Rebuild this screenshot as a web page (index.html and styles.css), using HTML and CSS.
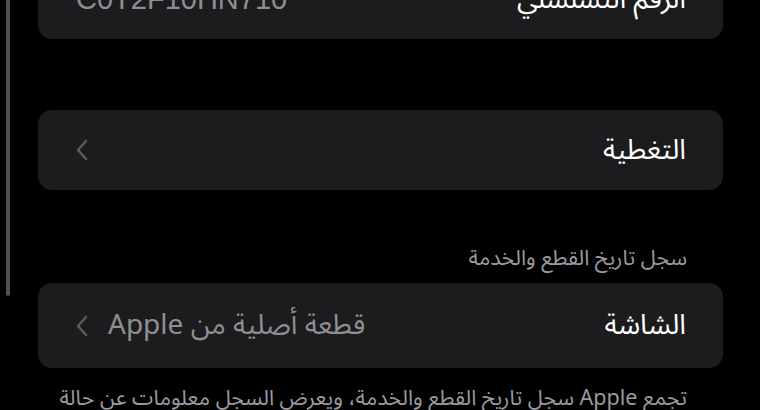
FILE: index.html
```html
<!DOCTYPE html>
<html lang="ar" dir="rtl">
<head>
<meta charset="utf-8">
<title>Parts and Service History</title>
<link rel="stylesheet" href="styles.css">
</head>
<body>
<div class="screen">
  <div class="card card-first">
    <div class="row">
      <span class="label">الرقم التسلسلي</span>
      <span class="value serial">C0T2F10HN710</span>
    </div>
  </div>

  <div class="card card-coverage">
    <div class="row">
      <span class="label">التغطية</span>
      <svg class="chev" width="12" height="22" viewBox="0 0 12 22"><polyline points="10,2 2,11 10,20" fill="none" stroke="#5b5b60" stroke-width="2.6" stroke-linecap="round" stroke-linejoin="round"/></svg>
    </div>
  </div>

  <div class="section-header">سجل تاريخ القطع والخدمة</div>

  <div class="card card-parts">
    <div class="row">
      <span class="label">الشاشة</span>
      <span class="detail">
        <span class="value">قطعة أصلية من Apple</span>
        <svg class="chev" width="12" height="22" viewBox="0 0 12 22"><polyline points="10,2 2,11 10,20" fill="none" stroke="#5b5b60" stroke-width="2.6" stroke-linecap="round" stroke-linejoin="round"/></svg>
      </span>
    </div>
  </div>

  <div class="footer">تجمع Apple سجل تاريخ القطع والخدمة، ويعرض السجل معلومات عن حالة</div>

  <div class="scroll-indicator"></div>
</div>
</body>
</html>
```

FILE: styles.css
```css
html, body {
  margin: 0;
  padding: 0;
  background: #000;
  overflow: hidden;
  height: 100%;
}

.screen {
  position: relative;
  width: 760px;
  height: 410px;
  overflow: hidden;
  box-sizing: border-box;
  padding: 0 37px 0 38px;
  display: flex;
  flex-direction: column;
  font-family: "Noto Sans Arabic", "DejaVu Sans", "Liberation Sans", sans-serif;
  color: #fff;
}

.card {
  background: #1c1c1e;
  border-radius: 14px;
  padding: 0 37px 0 38px;
  flex: none;
}

.card-first {
  margin-top: -41px;
}

.card-coverage {
  margin-top: 71px;
}

.row {
  display: flex;
  align-items: center;
  justify-content: space-between;
  height: 80px;
}

.card-parts .row {
  height: 85px;
}

.label {
  font-size: 28px;
  color: #fff;
}

.value {
  font-size: 28px;
  color: #8e8e93;
}

.serial {
  font-family: "Liberation Sans", sans-serif;
  font-size: 29px;
  direction: ltr;
}

.detail {
  display: flex;
  align-items: center;
  gap: 20px;
}

.chev {
  display: block;
  flex: none;
}

.section-header {
  margin-top: 55px;
  margin-bottom: 11px;
  padding-right: 36px;
  font-size: 21.5px;
  color: #9a9aa0;
  line-height: 27px;
  flex: none;
}

.footer {
  margin-top: 13px;
  padding-right: 36px;
  font-size: 21.5px;
  line-height: 34px;
  color: #9a9aa0;
  white-space: nowrap;
  flex: none;
}

.scroll-indicator {
  position: absolute;
  left: 6px;
  top: -10px;
  width: 4px;
  height: 306px;
  border-radius: 2px;
  background: #4f4f52;
}
```
